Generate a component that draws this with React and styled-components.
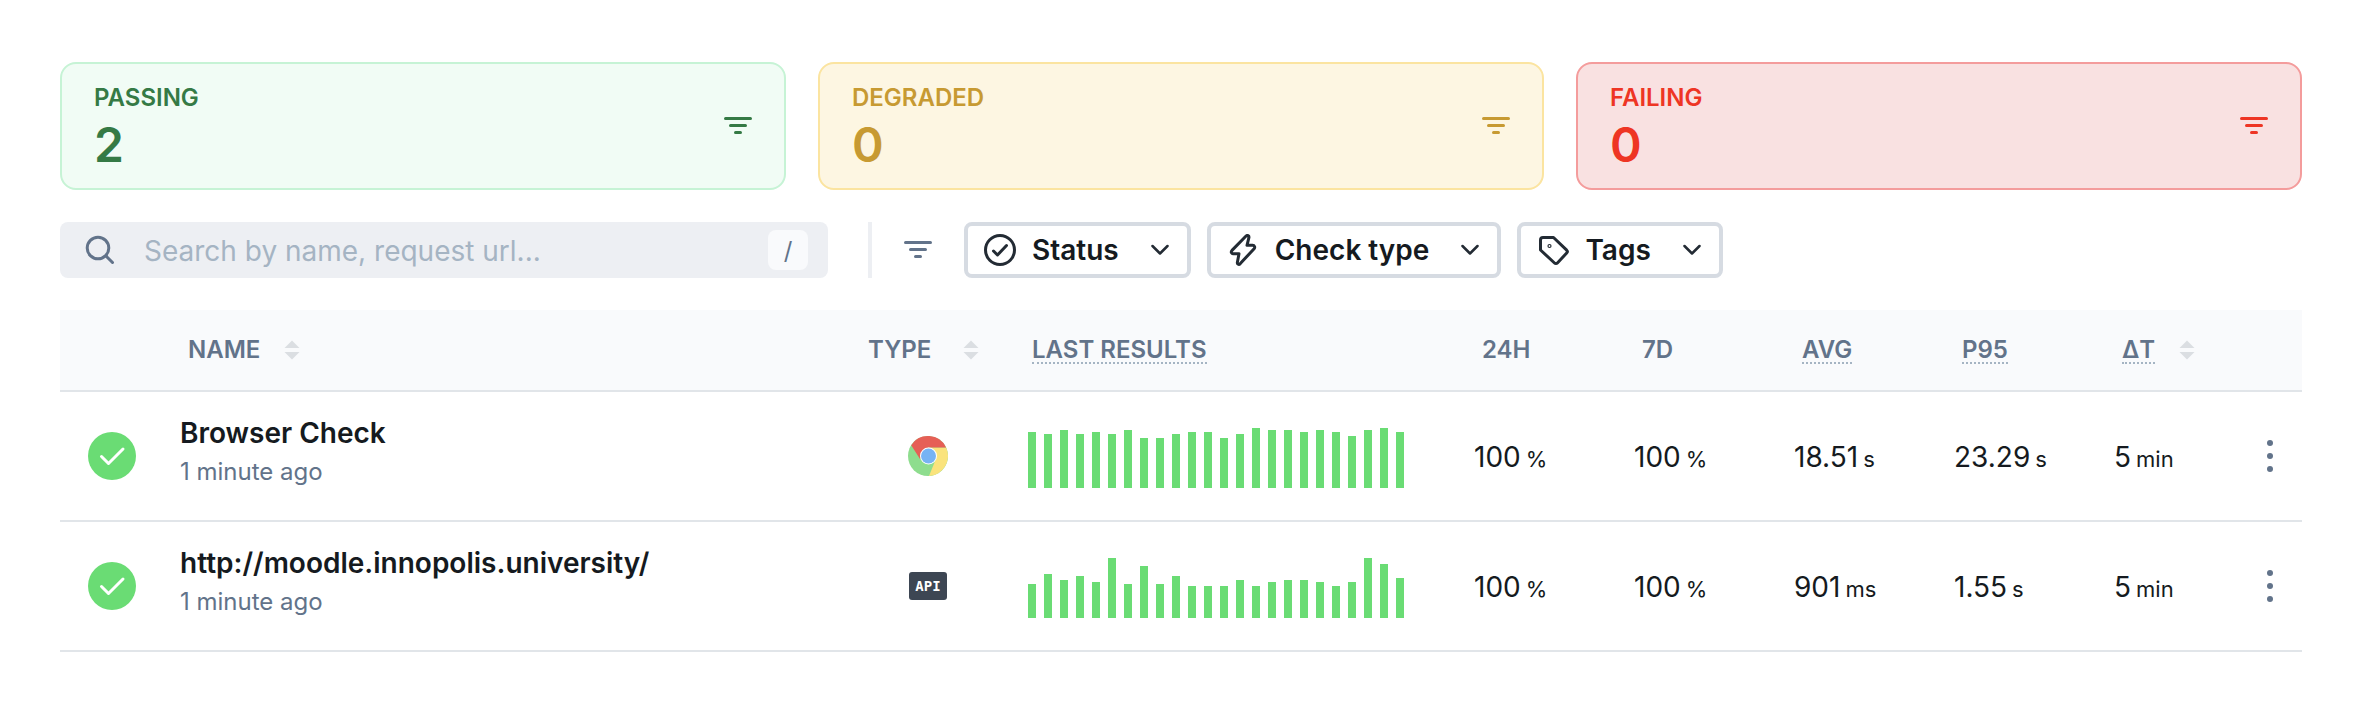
import React from "react";
import styled, { createGlobalStyle } from "styled-components";

const GlobalStyle = createGlobalStyle`
  *, *::before, *::after { box-sizing: border-box; }
  body {
    margin: 0;
    background: #fff;
    color: #151a20;
    font-family: Inter, "Liberation Sans", sans-serif;
    font-size: 28px;
  }
  button, input { font: inherit; color: inherit; }
`;

const Page = styled.main`
  padding: 62px 58px 56px 60px;
`;

const Cards = styled.section`
  display: grid;
  grid-template-columns: repeat(3, 1fr);
  gap: 32px;
  margin-bottom: 32px;
`;

const tones = {
  passing: { ink: "#357a45", line: "#c6f3d5", fill: "#f1fcf5" },
  degraded: { ink: "#c79a32", line: "#fbe4a0", fill: "#fdf6e2" },
  failing: { ink: "#ee3524", line: "#f49c9c", fill: "#f9e1e1" },
};

const Card = styled.button`
  display: flex;
  align-items: center;
  justify-content: space-between;
  height: 128px;
  padding: 0 32px;
  border: 2px solid ${(p) => tones[p.$tone].line};
  border-radius: 16px;
  background: ${(p) => tones[p.$tone].fill};
  color: ${(p) => tones[p.$tone].ink};
  text-align: left;
  cursor: pointer;
`;

const CardText = styled.span`
  display: flex;
  flex-direction: column;
  padding-top: 4px;
`;

const CardLabel = styled.span`
  font-size: 24px;
  line-height: 34px;
  font-weight: 600;
`;

const CardCount = styled.span`
  font-size: 48px;
  line-height: 60px;
  font-weight: 600;
`;

const Toolbar = styled.section`
  display: flex;
  align-items: center;
  margin-bottom: 32px;
`;

const SearchBox = styled.label`
  display: flex;
  align-items: center;
  flex: 0 1 768px;
  height: 56px;
  padding: 0 20px 0 24px;
  border-radius: 8px;
  background: #edeff3;
  color: #62738a;
`;

const SearchInput = styled.input`
  flex: 1;
  min-width: 0;
  height: 56px;
  margin-left: 28px;
  padding: 2px 0 0;
  border: 0;
  outline: 0;
  background: transparent;
  color: #151a20;
  &::placeholder { color: #a5b4c3; opacity: 1; }
`;

const Key = styled.kbd`
  display: flex;
  align-items: center;
  justify-content: center;
  width: 40px;
  height: 40px;
  border-radius: 8px;
  background: #f9fafc;
  font-family: inherit;
  font-size: 24px;
`;

const Divider = styled.span`
  width: 4px;
  height: 56px;
  margin: 0 32px 0 40px;
  background: #edeff3;
`;

const FilterMark = styled.span`
  display: flex;
  margin-right: 32px;
  color: #62738a;
`;

const Filters = styled.div`
  display: flex;
  gap: 16px;
`;

const FilterButton = styled.button`
  display: flex;
  align-items: center;
  height: 56px;
  padding: 0 18px 0 16px;
  border: 4px solid #d6dbe2;
  border-radius: 8px;
  background: #fff;
  font-weight: 600;
  cursor: pointer;
`;

const FilterLabel = styled.span`
  margin: 0 32px 0 16px;
`;

const Table = styled.table`
  width: 100%;
  border-collapse: separate;
  border-spacing: 0;
  table-layout: fixed;
`;

const Col = styled.col`
  width: ${(p) => (p.$w ? `${p.$w}px` : "auto")};
`;

const Th = styled.th`
  height: 82px;
  padding: 0 0 0 ${(p) => p.$pad || 0}px;
  border-bottom: 2px solid #e1e5e9;
  background: #f9fafc;
  color: #62738a;
  font-size: 24px;
  line-height: 28px;
  font-weight: 600;
  text-align: left;
`;

const HeadCell = styled.div`
  display: flex;
  align-items: center;
  height: 28px;
`;

const SortButton = styled.button`
  display: flex;
  align-items: center;
  gap: ${(p) => p.$gap || 24}px;
  height: 28px;
  padding: 0;
  border: 0;
  background: transparent;
  cursor: pointer;
`;

const Hint = styled.abbr`
  height: 28px;
  border-bottom: 2px dotted #a5b4c3;
  text-decoration: none;
`;

const Td = styled.td`
  height: 130px;
  padding: 0 0 0 ${(p) => p.$pad || 0}px;
  border-bottom: 2px solid #e1e5e9;
  white-space: nowrap;
`;

const MetricTd = styled(Td)`
  padding-top: 2px;
`;

const StatusDot = styled.span`
  display: flex;
  align-items: center;
  justify-content: center;
  width: 48px;
  height: 48px;
  border-radius: 50%;
  background: #6adc74;
`;

const CheckText = styled.div`
  padding-bottom: 8px;
`;

const CheckName = styled.a`
  display: block;
  color: inherit;
  font-weight: 600;
  line-height: 40px;
  text-decoration: none;
`;

const CheckTime = styled.span`
  display: block;
  color: #62738a;
  font-size: 24px;
  line-height: 38px;
`;

const TypeMark = styled.div`
  display: flex;
  align-items: center;
  justify-content: center;
  width: 40px;
  height: 40px;
`;

const ApiBadge = styled.span`
  display: flex;
  align-items: center;
  justify-content: center;
  width: 38px;
  height: 28px;
  border-radius: 3px;
  background: #3d4653;
  color: #fff;
  font-family: "DejaVu Sans Mono", monospace;
  font-size: 14px;
  font-weight: 700;
`;

const Bars = styled.div`
  display: flex;
  align-items: flex-end;
  gap: 8px;
  height: 64px;
`;

const Bar = styled.span`
  width: 8px;
  background: #6adc74;
`;

const Unit = styled.span`
  margin-left: 5px;
  font-size: 22px;
`;

const MenuButton = styled.button`
  display: flex;
  padding: 0;
  border: 0;
  background: transparent;
  cursor: pointer;
`;

const FilterIcon = () => (
  <svg width="28" height="18" viewBox="0 0 28 18" stroke="currentColor" strokeWidth="3" strokeLinecap="round" aria-hidden="true">
    <path d="M1.5 1.500h25M6.500 8.500h15M11.500 15.500h5" />
  </svg>
);

const SearchIcon = () => (
  <svg width="32" height="32" viewBox="0 0 32 32" fill="none" stroke="currentColor" strokeWidth="3" strokeLinecap="round" aria-hidden="true">
    <circle cx="14" cy="14" r="10.800" />
    <path d="M22 22l6.500 6.500" />
  </svg>
);

const ChevronIcon = () => (
  <svg width="18" height="12" viewBox="0 0 18 12" fill="none" stroke="#232b34" strokeWidth="2.500" strokeLinecap="round" strokeLinejoin="round" aria-hidden="true">
    <path d="M1.500 2L9 9.500 16.500 2" />
  </svg>
);

const line = { width: 32, height: 32, viewBox: "0 0 32 32", fill: "none", stroke: "#232b34", strokeWidth: 3, strokeLinecap: "round", strokeLinejoin: "round", "aria-hidden": true };

const StatusIcon = () => (
  <svg {...line}>
    <circle cx="16" cy="16" r="14.500" />
    <path d="M9.500 17l4 4L22.500 11.500" />
  </svg>
);

const BoltIcon = () => (
  <svg {...line}>
    <path d="M18.800 2.200C20.300 0.700 22.300 1.700 21.900 3.700L20 11.300H25.600C27.600 11.300 28.300 13.300 27.100 14.700L13.300 29.600C11.800 31.100 10 30.200 10.400 28.200L12 19.800H6.400C4.400 19.800 3.600 18 5 16.400Z" />
  </svg>
);

const TagIcon = () => (
  <svg {...line}>
    <path d="M3.500 6A2.500 2.500 0 0 1 6 3.500H16.500L29.700 16.200a2 2 0 0 1 0 2.800L20.400 29a2 2 0 0 1-2.900 0L3.500 16z" />
    <circle cx="12.500" cy="12" r="0.600" />
  </svg>
);

const SortIcon = () => (
  <svg width="16" height="20" viewBox="0 0 16 20" fill="#dbdee2" aria-hidden="true">
    <path d="M0.500 8L8 0.500 15.500 8zM0.500 12L8 19.500 15.500 12z" />
  </svg>
);

const TickIcon = () => (
  <svg width="28" height="20" viewBox="0 0 28 20" fill="none" stroke="#fff" strokeWidth="3" strokeLinecap="round" strokeLinejoin="round" aria-hidden="true">
    <path d="M3.500 10.500l7 7L25 3" />
  </svg>
);

const ChromeIcon = () => (
  <svg width="40" height="40" viewBox="0 0 40 40" role="img" aria-label="Browser">
    <circle cx="20" cy="20" r="20" fill="#8edd8e" />
    <path d="M20 11.500H38.100A20 20 0 0 1 21 40L27.500 24z" fill="#fae37c" />
    <path d="M3.200 9.200A20 20 0 0 1 38.100 11.500H20L12 23z" fill="#e65f56" />
    <circle cx="20.500" cy="20" r="8.500" fill="#fff" />
    <circle cx="20.500" cy="20" r="7.500" fill="#77b3f3" />
  </svg>
);

const DotsIcon = () => (
  <svg width="6" height="32" viewBox="0 0 6 32" fill="#62738a" aria-hidden="true">
    <circle cx="3" cy="3" r="3" />
    <circle cx="3" cy="16" r="3" />
    <circle cx="3" cy="29" r="3" />
  </svg>
);

const summaries = [
  { tone: "passing", label: "PASSING", count: 2 },
  { tone: "degraded", label: "DEGRADED", count: 0 },
  { tone: "failing", label: "FAILING", count: 0 },
];

const filters = [
  { label: "Status", Icon: StatusIcon },
  { label: "Check type", Icon: BoltIcon },
  { label: "Tags", Icon: TagIcon },
];

const checks = [
  {
    name: "Browser Check",
    type: "browser",
    bars: [56, 54, 58, 54, 56, 54, 58, 50, 50, 54, 56, 56, 50, 54, 60, 58, 58, 56, 58, 56, 52, 58, 60, 56],
    metrics: [["100", "%"], ["100", "%"], ["18.51", "s"], ["23.29", "s"], ["5", "min"]],
  },
  {
    name: "http://moodle.innopolis.university/",
    type: "api",
    bars: [34, 44, 38, 42, 36, 60, 34, 52, 34, 42, 32, 32, 32, 38, 32, 36, 38, 38, 36, 32, 36, 60, 54, 40],
    metrics: [["100", "%"], ["100", "%"], ["901", "ms"], ["1.55", "s"], ["5", "min"]],
  },
];

export default function App() {
  return (
    <>
      <GlobalStyle />
      <Page>
        <Cards>
          {summaries.map((s) => (
            <Card key={s.tone} $tone={s.tone}>
              <CardText>
                <CardLabel>{s.label}</CardLabel>
                <CardCount>{s.count}</CardCount>
              </CardText>
              <FilterIcon />
            </Card>
          ))}
        </Cards>
        <Toolbar>
          <SearchBox>
            <SearchIcon />
            <SearchInput type="text" aria-label="Search checks" placeholder="Search by name, request url..." />
            <Key>/</Key>
          </SearchBox>
          <Divider />
          <FilterMark><FilterIcon /></FilterMark>
          <Filters>
            {filters.map(({ label, Icon }) => (
              <FilterButton key={label}>
                <Icon />
                <FilterLabel>{label}</FilterLabel>
                <ChevronIcon />
              </FilterButton>
            ))}
          </Filters>
        </Toolbar>
        <Table>
          <colgroup>
            <Col $w={120} />
            <Col />
            <Col $w={160} />
            <Col $w={446} />
            <Col $w={160} />
            <Col $w={160} />
            <Col $w={160} />
            <Col $w={160} />
            <Col $w={153} />
            <Col $w={35} />
          </colgroup>
          <thead>
            <tr>
              <Th aria-label="Status" />
              <Th $pad={8}><SortButton>NAME<SortIcon /></SortButton></Th>
              <Th><SortButton $gap={32}>TYPE<SortIcon /></SortButton></Th>
              <Th $pad={4}><HeadCell><Hint>LAST RESULTS</Hint></HeadCell></Th>
              <Th $pad={8}><HeadCell>24H</HeadCell></Th>
              <Th $pad={8}><HeadCell>7D</HeadCell></Th>
              <Th $pad={8}><HeadCell><Hint>AVG</Hint></HeadCell></Th>
              <Th $pad={8}><HeadCell><Hint>P95</Hint></HeadCell></Th>
              <Th $pad={8}><SortButton><Hint>ΔT</Hint><SortIcon /></SortButton></Th>
              <Th aria-label="Actions" />
            </tr>
          </thead>
          <tbody>
            {checks.map((c) => (
              <tr key={c.name}>
                <Td $pad={28}><StatusDot><TickIcon /></StatusDot></Td>
                <Td>
                  <CheckText>
                    <CheckName href="#">{c.name}</CheckName>
                    <CheckTime>1 minute ago</CheckTime>
                  </CheckText>
                </Td>
                <Td $pad={40}>
                  <TypeMark>{c.type === "browser" ? <ChromeIcon /> : <ApiBadge>API</ApiBadge>}</TypeMark>
                </Td>
                <Td>
                  <Bars>
                    {c.bars.map((h, i) => <Bar key={i} style={{ height: h }} />)}
                  </Bars>
                </Td>
                {c.metrics.map(([value, unit], i) => (
                  <MetricTd key={i}>{value}<Unit>{unit}</Unit></MetricTd>
                ))}
                <Td><MenuButton aria-label={`Actions for ${c.name}`}><DotsIcon /></MenuButton></Td>
              </tr>
            ))}
          </tbody>
        </Table>
      </Page>
    </>
  );
}
